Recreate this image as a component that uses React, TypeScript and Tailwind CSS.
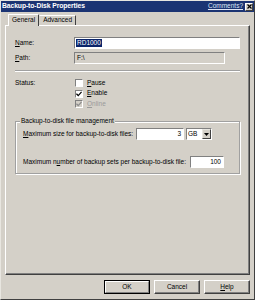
import React from "react";

const font = { fontFamily: '"Liberation Sans", Arial, sans-serif' };

function Check({ checked, disabled, label, u }: { checked?: boolean; disabled?: boolean; label: string; u: string }) {
  return (
    <div className="flex items-center h-[10px]">
      <div
        className={`w-[8px] h-[8px] border border-t-[#808080] border-l-[#808080] border-r-white border-b-white flex items-center justify-center ${disabled ? "bg-[#d4d0c8]" : "bg-white"}`}
      >
        {checked && (
          <svg width="6" height="6" viewBox="0 0 7 7">
            <path d="M0.5 3.2 L2.6 5.3 L6.5 1" stroke={disabled ? "#8a8a8a" : "#000"} strokeWidth="1.4" fill="none" />
          </svg>
        )}
      </div>
      <span className={`ml-[4px] text-[6.5px] leading-none ${disabled ? "text-[#9a9a9a]" : "text-black"}`}>
        <span className="underline">{u}</span>
        {label}
      </span>
    </div>
  );
}

export default function App() {
  return (
    <div style={font} className="w-[255px] h-[300px] bg-[#d4d0c8] border border-t-[#e8e6e0] border-l-[#e8e6e0] border-r-[#404040] border-b-[#404040] flex flex-col overflow-hidden">
      {/* Title bar */}
      <div className="h-[11px] bg-[#1b3473] flex items-center justify-between pl-[1px] pr-[1px]">
        <span className="text-white font-bold text-[6.8px] leading-none tracking-[-0.1px]">Backup-to-Disk Properties</span>
        <div className="flex items-center gap-[2px]">
          <span className="text-[#dfe6f5] text-[6.5px] underline leading-none">Comments?</span>
          <div className="w-[8px] h-[8px] bg-[#d4d0c8] border border-t-white border-l-white border-r-[#404040] border-b-[#404040] flex items-center justify-center">
            <svg width="5" height="5" viewBox="0 0 5 5">
              <path d="M0.5 0.5 L4.5 4.5 M4.5 0.5 L0.5 4.5" stroke="#000" strokeWidth="1.2" />
            </svg>
          </div>
        </div>
      </div>

      {/* Tabs */}
      <div className="mt-[2px] pl-[7px] flex items-end h-[11px] relative z-10">
        <div className="h-[12px] px-[3px] bg-[#d4d0c8] border border-b-0 border-t-white border-l-white border-r-[#404040] rounded-t-[1px] flex items-center -mb-[1px] pb-[1px]">
          <span className="text-[6.5px] text-black leading-none">General</span>
        </div>
        <div className="h-[10px] px-[3px] border border-b-0 border-t-white border-l-[#d4d0c8] border-r-[#404040] flex items-center">
          <span className="text-[6.5px] text-black leading-none">Advanced</span>
        </div>
      </div>

      {/* Panel */}
      <div className="mx-[4px] h-[250px] border border-t-white border-l-white border-r-[#404040] border-b-[#404040] shadow-[inset_-1px_-1px_0_#808080] pl-[9px] pr-[8px] pt-[11px] flex flex-col">
        {/* Name */}
        <div className="flex items-center h-[12px]">
          <span className="w-[59px] text-[6.5px] text-black leading-none"><span className="underline">N</span>ame:</span>
          <div className="w-[166px] h-[12px] bg-white border border-t-[#808080] border-l-[#808080] border-r-white border-b-white flex items-center pl-[1px]">
            <span className="bg-[#0a246a] text-white text-[6.5px] leading-[8px] px-[1px]">RD1000</span>
          </div>
        </div>
        {/* Path */}
        <div className="flex items-center h-[12px] mt-[3px]">
          <span className="w-[59px] text-[6.5px] text-black leading-none"><span className="underline">P</span>ath:</span>
          <div className="w-[151px] h-[12px] bg-[#d4d0c8] border border-t-[#808080] border-l-[#808080] border-r-white border-b-white flex items-center pl-[2px]">
            <span className="text-[6.5px] text-black leading-none">F:\</span>
          </div>
        </div>
        {/* Separator */}
        <div className="mt-[6px] w-[225px] h-[2px] border-t border-t-[#a0a0a0] border-b border-b-white" />
        {/* Status */}
        <div className="flex mt-[6px]">
          <span className="w-[60px] text-[6.5px] text-black leading-none mt-[2px]">Status:</span>
          <div className="flex flex-col gap-[0.5px]">
            <Check u="P" label="ause" />
            <Check u="E" label="nable" checked />
            <Check u="O" label="nline" checked disabled />
          </div>
        </div>
        {/* Group box */}
        <div className="mt-[12px] w-[225px] h-[53px] border border-[#a0a0a0] shadow-[inset_1px_1px_0_#fff,1px_1px_0_#fff] relative pl-[7px] pt-[6px]">
          <span className="absolute -top-[4px] left-[4px] bg-[#d4d0c8] px-[1px] text-[6.5px] text-black leading-none">Backup-to-disk file management</span>
          <div className="flex items-center h-[12px]">
            <span className="w-[113px] text-[6.5px] text-black leading-none"><span className="underline">M</span>aximum size for backup-to-disk files:</span>
            <div className="w-[48px] h-[12px] bg-white border border-t-[#808080] border-l-[#808080] border-r-white border-b-white flex items-center justify-end pr-[2px]">
              <span className="text-[6.5px] text-black leading-none">3</span>
            </div>
            <div className="ml-[2px] w-[26px] h-[12px] bg-white border border-t-[#808080] border-l-[#808080] border-r-white border-b-white flex items-center justify-between pl-[1px]">
              <span className="text-[6.5px] text-black leading-none">GB</span>
              <div className="w-[9px] h-[10px] bg-[#d4d0c8] border border-t-[#e8e6e0] border-l-[#e8e6e0] border-r-[#404040] border-b-[#404040] flex items-center justify-center">
                <svg width="5" height="3" viewBox="0 0 5 3"><path d="M0 0 H5 L2.5 3 Z" fill="#000" /></svg>
              </div>
            </div>
          </div>
          <div className="flex items-center h-[12px] mt-[16px]">
            <span className="w-[167px] text-[6.5px] text-black leading-none">Maximum n<span className="underline">u</span>mber of backup sets per backup-to-disk file:</span>
            <div className="w-[34px] h-[12px] bg-white border border-t-[#808080] border-l-[#808080] border-r-white border-b-white flex items-center justify-end pr-[2px]">
              <span className="text-[6.5px] text-black leading-none">100</span>
            </div>
          </div>
        </div>
      </div>

      {/* Buttons */}
      <div className="flex justify-end gap-[4px] pr-[4px] mt-[5px]">
        <div className="w-[46px] h-[14px] border border-black flex">
          <div className="flex-1 border border-t-white border-l-white border-r-[#808080] border-b-[#808080] flex items-center justify-center">
            <span className="text-[6.5px] text-black leading-none">OK</span>
          </div>
        </div>
        <div className="w-[46px] h-[14px] border border-t-white border-l-white border-r-[#404040] border-b-[#404040] shadow-[inset_-1px_-1px_0_#808080] flex items-center justify-center">
          <span className="text-[6.5px] text-black leading-none">Cancel</span>
        </div>
        <div className="w-[46px] h-[14px] border border-t-white border-l-white border-r-[#404040] border-b-[#404040] shadow-[inset_-1px_-1px_0_#808080] flex items-center justify-center">
          <span className="text-[6.5px] text-black leading-none"><span className="underline">H</span>elp</span>
        </div>
      </div>
    </div>
  );
}
